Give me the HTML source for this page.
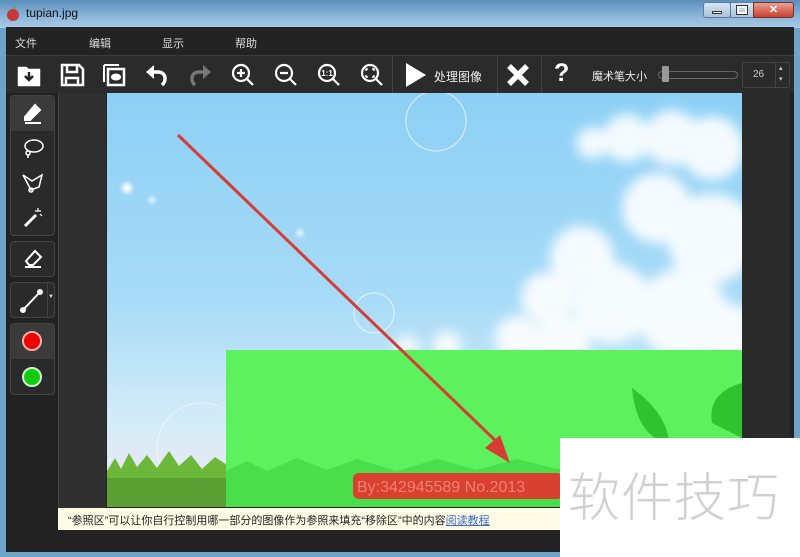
<!DOCTYPE html>
<html><head><meta charset="utf-8"><style>
*{margin:0;padding:0;box-sizing:border-box}
body{width:800px;height:557px;overflow:hidden;background:#6fa3c8;font-family:"Liberation Sans","Noto Sans CJK SC",sans-serif;position:relative}
.abs{position:absolute}
.title{left:0;top:0;width:800px;height:28px;background:linear-gradient(#5c8fbd,#8db7da 60%,#a9cbe6)}
.app{left:6px;top:27px;width:788px;height:525px;background:#222}
.menu{left:6px;top:27px;width:788px;height:28px;background:#232323;color:#ddd;font-size:11px}
.menu span{position:absolute;top:8px}
.tb{left:6px;top:55px;width:788px;height:38px;background:#2b2b2b;border-top:1px solid #3a3a3a}
.ic{position:absolute;top:6px}
.lp{left:10px;top:95px;width:45px;height:300px}
.grp{position:absolute;left:0;width:45px;border:1px solid #444;border-radius:4px;background:#2a2a2a}
.mid{left:58px;top:93px;width:48px;height:415px;background:#303030;border-left:1px solid #444}
.canvas{left:107px;top:93px;width:635px;height:414px;background:linear-gradient(#8dd0f5,#a7dbf7 50%,#d5ecf8 80%,#f3e6ee)}
.tip{left:58px;top:508px;width:502px;height:22px;background:#fdfbe6;font-size:11px;color:#222;padding:4px 0 0 10px}
.wm{left:560px;top:438px;width:240px;height:119px;background:#fff;color:#d0d0d0;font-size:52px;font-family:"Noto Sans CJK SC",sans-serif;font-weight:300;padding:18px 0 0 8px;letter-spacing:1px}
</style></head><body>
<div class="abs title"></div>
<svg class="abs" style="left:5px;top:6px" width="16" height="16"><circle cx="8" cy="9" r="6" fill="#c8383a"/><path d="M8 3 L11 1" stroke="#6a4" stroke-width="2"/></svg>
<div class="abs" style="left:26px;top:6px;font-size:12px;color:#111">tupian.jpg</div>
<div class="abs" style="left:703px;top:2px;width:28px;height:16px;border:1px solid #5a7ea0;border-radius:3px;background:linear-gradient(#d8e6f2,#a9c2da)"><div style="margin:8px auto 0;width:10px;height:3px;background:#fff;border:1px solid #333"></div></div>
<div class="abs" style="left:730px;top:2px;width:24px;height:16px;border:1px solid #5a7ea0;background:linear-gradient(#d8e6f2,#a9c2da)"><div style="margin:3px auto 0;width:10px;height:8px;border:2px solid #fff;outline:1px solid #333"></div></div>
<div class="abs" style="left:753px;top:2px;width:41px;height:16px;border:1px solid #7a3030;border-radius:0 3px 3px 0;background:linear-gradient(#e8a090,#c8402c);color:#fff;font-size:11px;font-weight:bold;text-align:center;line-height:15px">✕</div>
<div class="abs app"></div>
<div class="abs menu"><span style="left:9px">文件</span><span style="left:83px">编辑</span><span style="left:156px">显示</span><span style="left:229px">帮助</span></div>
<div class="abs tb">
<svg class="ic" style="left:10px" width="26" height="26" fill="none" stroke="#fff" stroke-width="2.5"><path d="M3 6h7l2 2h11v15H3z" fill="#fff"/><path d="M13 10v8M9 14l4 4 4-4" stroke="#222"/></svg>
<svg class="ic" style="left:53px" width="26" height="26" fill="none" stroke="#fff" stroke-width="2.5"><path d="M3 3h17l4 4v16H3z"/><path d="M8 3v7h10V3M7 23v-7h12v7"/></svg>
<svg class="ic" style="left:95px" width="26" height="26" fill="none" stroke="#fff" stroke-width="2"><path d="M3 3h15M3 3v17"/><rect x="7" y="7" width="16" height="16" stroke-width="2.5"/><ellipse cx="15" cy="15" rx="4" ry="2.5" fill="#fff"/></svg>
<svg class="ic" style="left:138px" width="26" height="26" fill="none" stroke="#fff" stroke-width="3.5"><path d="M18 23c5-4 4-13-4-13H6"/><path d="M2 10l8-7v14z" fill="#fff" stroke="none"/></svg>
<svg class="ic" style="left:181px" width="26" height="26" fill="none" stroke="#777" stroke-width="3.5"><path d="M8 23c-5-4-4-13 4-13h8"/><path d="M24 10l-8-7v14z" fill="#777" stroke="none"/></svg>
<svg class="ic" style="left:224px" width="26" height="26" fill="none" stroke="#fff" stroke-width="2.2"><circle cx="11" cy="11" r="8"/><path d="M17 17l6 6M7 11h8M11 7v8"/></svg>
<svg class="ic" style="left:267px" width="26" height="26" fill="none" stroke="#fff" stroke-width="2.2"><circle cx="11" cy="11" r="8"/><path d="M17 17l6 6M7 11h8"/></svg>
<svg class="ic" style="left:310px" width="26" height="26" fill="none" stroke="#fff" stroke-width="2.2"><circle cx="11" cy="11" r="8"/><path d="M17 17l6 6"/><text x="11" y="14" font-size="8" fill="#fff" stroke="none" text-anchor="middle" font-weight="bold">1:1</text></svg>
<svg class="ic" style="left:353px" width="26" height="26" fill="none" stroke="#fff" stroke-width="2.2"><circle cx="11" cy="11" r="8"/><path d="M17 17l6 6"/><path d="M7 9V7h2M13 7h2v2M15 13v2h-2M9 15H7v-2" stroke-width="1.5"/></svg>
<div style="position:absolute;left:386px;top:0;width:1px;height:38px;background:#444"></div>
<svg class="ic" style="left:398px;top:5px" width="24" height="28"><path d="M2 2l20 12L2 26z" fill="#fff"/></svg>
<div style="position:absolute;left:428px;top:12px;color:#eee;font-size:12px">处理图像</div>
<div style="position:absolute;left:491px;top:0;width:1px;height:38px;background:#444"></div>
<svg class="ic" style="left:500px;top:7px" width="24" height="24" stroke="#fff" stroke-width="5.5"><path d="M3 3l18 18M21 3L3 21"/></svg>
<div style="position:absolute;left:535px;top:0;width:1px;height:38px;background:#444"></div>
<div style="position:absolute;left:548px;top:3px;color:#fff;font-size:25px;font-weight:bold">?</div>
<div style="position:absolute;left:586px;top:12px;color:#eee;font-size:11px">魔术笔大小</div>
<div style="position:absolute;left:652px;top:15px;width:80px;height:8px;border:1px solid #666;border-radius:4px"></div>
<div style="position:absolute;left:656px;top:10px;width:7px;height:16px;background:#999;border-radius:1px"></div>
<div style="position:absolute;left:736px;top:6px;width:48px;height:26px;border:1px solid #444;border-radius:3px;color:#ccc;font-size:10px;padding:6px 0 0 10px">26</div>
<div style="position:absolute;left:769px;top:7px;width:1px;height:24px;background:#444"></div>
<div style="position:absolute;left:773px;top:7px;color:#ccc;font-size:7px;line-height:11px">▴<br>▾</div>
</div>
<div class="abs mid"></div>
<div class="abs lp">
<div class="grp" style="top:0;height:141px">
 <div style="height:35px;background:#3a3a3a;border-radius:4px 4px 0 0"></div>
</div>
<svg class="abs" style="left:11px;top:6px" width="24" height="24" fill="none" stroke="#fff" stroke-width="2"><path d="M4 16l10-12 5 5-10 10H4z" fill="#fff"/><path d="M4 22h16"/></svg>
<svg class="abs" style="left:11px;top:41px" width="24" height="24" fill="none" stroke="#fff" stroke-width="1.5"><ellipse cx="13" cy="10" rx="9" ry="6"/><circle cx="7" cy="17" r="2"/><path d="M7 19v3"/></svg>
<svg class="abs" style="left:11px;top:76px" width="24" height="24" fill="none" stroke="#fff" stroke-width="1.5"><path d="M2 4l9 6 10-6-3 12-8 3z"/><circle cx="10" cy="19" r="2"/></svg>
<svg class="abs" style="left:11px;top:110px" width="24" height="24" stroke="#fff" stroke-width="3"><path d="M4 21l11-11"/><path d="M17 3v3M14 6h6M19 9l2 2" stroke-width="1.2"/></svg>
<div class="grp" style="top:146px;height:36px"></div>
<svg class="abs" style="left:11px;top:151px" width="24" height="24" fill="none" stroke="#fff" stroke-width="2"><path d="M5 15l9-10 6 6-8 8H8z"/><path d="M4 21h16"/></svg>
<div class="grp" style="top:187px;height:36px"><div style="position:absolute;left:36px;top:0;width:1px;height:34px;background:#444"></div></div>
<svg class="abs" style="left:9px;top:193px" width="26" height="26" stroke="#fff" stroke-width="2"><path d="M4 22L20 5"/><circle cx="4" cy="22" r="2" fill="#fff"/><circle cx="21" cy="4" r="2" fill="#fff"/></svg>
<div class="abs" style="left:38px;top:199px;color:#ddd;font-size:6px">▼</div>
<div class="grp" style="top:228px;height:72px"><div style="height:35px;background:#3a3a3a;border-radius:4px 4px 0 0"></div></div>
<div class="abs" style="left:12px;top:236px;width:20px;height:20px;border-radius:50%;background:#e00;border:2px solid #f4b0a8"></div>
<div class="abs" style="left:12px;top:272px;width:20px;height:20px;border-radius:50%;background:#1c1;border:2px solid #cfc"></div>
</div>
<div class="abs canvas"></div>
<svg class="abs" style="left:107px;top:93px" width="635" height="414">
<defs><filter id="b" x="-20%" y="-20%" width="140%" height="140%"><feGaussianBlur stdDeviation="6"/></filter><filter id="s"><feGaussianBlur stdDeviation="2"/></filter></defs>
<g fill="#fff" opacity="0.9" filter="url(#b)"><circle cx="485" cy="50" r="16"/><circle cx="520" cy="45" r="24"/><circle cx="565" cy="45" r="28"/><circle cx="605" cy="55" r="32"/><circle cx="550" cy="115" r="35"/><circle cx="605" cy="145" r="45"/><circle cx="475" cy="165" r="32"/><circle cx="440" cy="205" r="26"/><circle cx="505" cy="210" r="40"/><circle cx="575" cy="220" r="45"/><circle cx="410" cy="245" r="22"/><circle cx="455" cy="250" r="28"/><circle cx="340" cy="252" r="14"/><circle cx="300" cy="255" r="12"/><circle cx="620" cy="240" r="30"/></g>
<circle cx="329" cy="28" r="30" fill="none" stroke="#fff" stroke-width="1.2" opacity=".6"/>
<circle cx="267" cy="220" r="20" fill="none" stroke="#fff" stroke-width="1.2" opacity=".6"/>
<circle cx="95" cy="355" r="45" fill="none" stroke="#fff" stroke-width="1" opacity=".5"/>
<g fill="#fff" filter="url(#s)"><circle cx="20" cy="95" r="5"/><circle cx="45" cy="107" r="3"/><circle cx="193" cy="140" r="3"/></g>
<path d="M0 378 L8 365 L14 376 L22 360 L30 374 L40 362 L50 375 L62 358 L72 373 L84 362 L95 376 L108 364 L120 372 L120 414 L0 414z" fill="#6cb83a"/>
<rect x="0" y="385" width="120" height="29" fill="#5aa032"/>
<rect x="119" y="257" width="516" height="157" fill="#5df25d"/>
<path d="M119 378 L140 368 L160 378 L190 365 L220 377 L250 366 L290 378 L330 366 L370 377 L410 366 L450 376 L500 366 L540 376 L580 366 L635 374 L635 414 L119 414z" fill="#4ade4a"/>
<path d="M525 295 Q560 320 562 350 Q530 345 525 295z M605 330 Q600 300 635 290 L635 345z" fill="#2fc42f"/>
<rect x="246" y="380" width="210" height="26" rx="6" fill="#d84030"/>
<text x="250" y="399" font-size="16" fill="#f08070" font-family="Liberation Sans">By:342945589  No.2013</text>
<path d="M71 42 L393 352" stroke="#d53d35" stroke-width="3"/>
<path d="M403 370 L378 355 L393 342z" fill="#d53d35"/>
</svg>
<div class="abs" style="left:742px;top:93px;width:48px;height:415px;background:#2a2a2a"></div>
<div class="abs tip">“参照区”可以让你自行控制用哪一部分的图像作为参照来填充“移除区”中的内容<span style="color:#3c6ac8;text-decoration:underline">阅读教程</span></div>
<div class="abs wm">软件技巧</div>
</body></html>
